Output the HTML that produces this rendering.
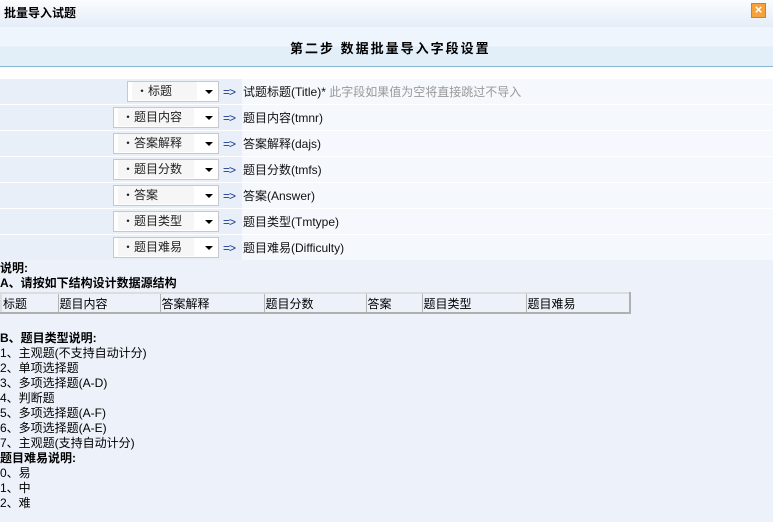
<!DOCTYPE html>
<html><head><meta charset="utf-8"><style>
*{margin:0;padding:0;box-sizing:border-box}
body{width:773px;height:522px;overflow:hidden;background:#edf2fa;font-family:"Liberation Sans","Noto Sans CJK SC",sans-serif;font-size:12px;color:#000;position:relative}
.abs{position:absolute}
.title{left:0;top:0;width:773px;height:27px;background:linear-gradient(#fbfcfe,#e4edf8);}
.title b{position:absolute;left:4px;top:4px;font-size:12px}
.close{right:7px;top:3px;width:15px;height:15px;background:#f7a13a;border:1px solid #e07d12;color:#fff;font-size:13px;line-height:12px;text-align:center;font-weight:bold}
.step{left:0;top:27px;width:773px;height:40px;background:linear-gradient(#eef5fc 0,#eef5fc 50%,#e2eff9 50%);border-bottom:1px solid #88b6d4}
.step b{position:absolute;left:290px;top:11px;font-size:13px;letter-spacing:2px}
.white{left:0;top:67px;width:773px;height:11px;background:#fff}
.row{left:0;width:773px;height:26px;border-top:1px solid #fff}
.lc{position:absolute;left:0;top:0;width:242px;height:25px;background:#e8eff9}
.rc{position:absolute;left:242px;top:0;right:0;height:25px;background:#f5f8fd}
.sel{position:absolute;top:2px;height:21px;background:#fff;border:1px solid #c8c8c8;font-size:12px;line-height:18px;padding-left:4px;color:#222}
.sel span{position:absolute;right:5px;top:8px;border-left:4px solid transparent;border-right:4px solid transparent;border-top:4px solid #000}
.sel i{font-style:normal;display:inline-block;background:#f6f6f6;padding:0 4px;width:76%}
.arr{position:absolute;left:223px;top:6px;color:#1a3a8c;font-size:12px;letter-spacing:-1px}
.lab{position:absolute;left:243px;top:4px;font-size:12px;color:#111}
.lab em{font-style:normal;color:#999}
.txt{left:0;line-height:15px;font-size:12px}
table{position:absolute;left:0;top:292px;width:629px;border-collapse:collapse;border:2px solid #b0b0b0;border-top-color:#ddd;border-left-color:#ddd;table-layout:fixed}
td{border:1px solid #b4b4b4;height:20px;padding:0 1px;font-size:12px;vertical-align:middle;overflow:hidden;white-space:nowrap}
</style></head><body>
<div class="abs title"><b>批量导入试题</b></div>
<div class="abs close">×</div>
<div class="abs step"><b>第二步 数据批量导入字段设置</b></div>
<div class="abs white"></div>

<div class="abs row" style="top:78px"><div class="lc"></div><div class="rc"></div><div class="sel" style="left:127px;width:92px"><i>・标题</i><span></span></div><div class="arr">=&gt;</div><div class="lab">试题标题(Title)* <em>此字段如果值为空将直接跳过不导入</em></div></div>
<div class="abs row" style="top:104px"><div class="lc"></div><div class="rc"></div><div class="sel" style="left:113px;width:106px"><i>・题目内容</i><span></span></div><div class="arr">=&gt;</div><div class="lab">题目内容(tmnr)</div></div>
<div class="abs row" style="top:130px"><div class="lc"></div><div class="rc"></div><div class="sel" style="left:113px;width:106px"><i>・答案解释</i><span></span></div><div class="arr">=&gt;</div><div class="lab">答案解释(dajs)</div></div>
<div class="abs row" style="top:156px"><div class="lc"></div><div class="rc"></div><div class="sel" style="left:113px;width:106px"><i>・题目分数</i><span></span></div><div class="arr">=&gt;</div><div class="lab">题目分数(tmfs)</div></div>
<div class="abs row" style="top:182px"><div class="lc"></div><div class="rc"></div><div class="sel" style="left:113px;width:106px"><i>・答案</i><span></span></div><div class="arr">=&gt;</div><div class="lab">答案(Answer)</div></div>
<div class="abs row" style="top:208px"><div class="lc"></div><div class="rc"></div><div class="sel" style="left:113px;width:106px"><i>・题目类型</i><span></span></div><div class="arr">=&gt;</div><div class="lab">题目类型(Tmtype)</div></div>
<div class="abs row" style="top:234px"><div class="lc"></div><div class="rc"></div><div class="sel" style="left:113px;width:106px"><i>・题目难易</i><span></span></div><div class="arr">=&gt;</div><div class="lab">题目难易(Difficulty)</div></div>

<div class="abs txt" style="top:261px"><b>说明:</b><br><b>A、请按如下结构设计数据源结构</b></div>
<table><colgroup><col style="width:57px"><col style="width:102px"><col style="width:104px"><col style="width:102px"><col style="width:56px"><col style="width:104px"><col style="width:104px"></colgroup><tr><td>标题</td><td>题目内容</td><td>答案解释</td><td>题目分数</td><td>答案</td><td>题目类型</td><td>题目难易</td></tr></table>
<div class="abs txt" style="top:331px"><b>B、题目类型说明:</b><br>1、主观题(不支持自动计分)<br>2、单项选择题<br>3、多项选择题(A-D)<br>4、判断题<br>5、多项选择题(A-F)<br>6、多项选择题(A-E)<br>7、主观题(支持自动计分)<br><b>题目难易说明:</b><br>0、易<br>1、中<br>2、难</div>
</body></html>
